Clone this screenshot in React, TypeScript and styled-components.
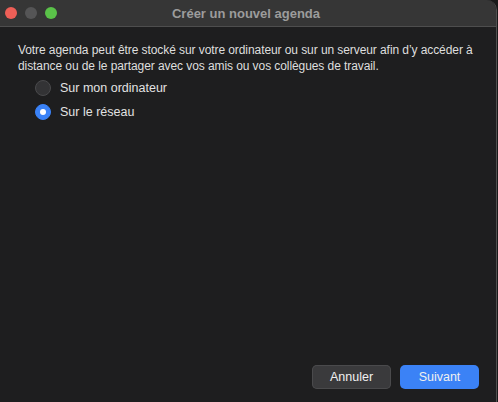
import React from "react";
import styled, { createGlobalStyle } from "styled-components";

const Global = createGlobalStyle`
  html, body { margin: 0; padding: 0; background: #1a1a1a; }
  body { font-family: "Liberation Sans", Arial, sans-serif; -webkit-font-smoothing: antialiased; }
  * { box-sizing: border-box; }
`;

const Window = styled.div`
  width: 497px;
  height: 402px;
  display: flex;
  flex-direction: column;
  background: #1e1e1f;
  border-right: 1px solid #505050;
  border-top-right-radius: 10px;
  overflow: hidden;
`;

const TitleBar = styled.div`
  height: 27px;
  flex: none;
  display: flex;
  align-items: center;
  position: relative;
  background: #363636;
  border-bottom: 1px solid #4e4e4e;
  padding-left: 5px;
`;

const Lights = styled.div`
  display: flex;
  gap: 8px;
`;

const Light = styled.span<{ $c: string }>`
  width: 12px;
  height: 12px;
  border-radius: 50%;
  background: ${(p) => p.$c};
`;

const Title = styled.div`
  position: absolute;
  inset: 0 4px 0 0;
  display: flex;
  align-items: center;
  justify-content: center;
  font-size: 13px;
  font-weight: 700;
  color: #9c9c9c;
  pointer-events: none;
`;

const Body = styled.div`
  flex: 1;
  display: flex;
  flex-direction: column;
  padding: 15px 17px 13px 18px;
`;

const Intro = styled.p`
  margin: 0;
  font-size: 12px;
  letter-spacing: -0.08px;
  line-height: 16px;
  color: #dedede;
`;

const Options = styled.div`
  display: flex;
  flex-direction: column;
  gap: 8px;
  margin-top: 6px;
  padding-left: 17px;
`;

const Option = styled.label`
  display: flex;
  align-items: center;
  gap: 9px;
  font-size: 12.5px;
  color: #e2e2e2;
  height: 16px;
`;

const Radio = styled.span<{ $on?: boolean }>`
  width: 16px;
  height: 16px;
  border-radius: 50%;
  display: flex;
  align-items: center;
  justify-content: center;
  background: ${(p) => (p.$on ? "#3a82f7" : "#333335")};
  border: 1px solid ${(p) => (p.$on ? "#3a82f7" : "#4a4a4c")};
  &::after {
    content: "";
    width: 6px;
    height: 6px;
    border-radius: 50%;
    background: #fff;
    display: ${(p) => (p.$on ? "block" : "none")};
  }
`;

const Spacer = styled.div`
  flex: 1;
`;

const Footer = styled.div`
  display: flex;
  justify-content: flex-end;
  gap: 9px;
`;

const Button = styled.button<{ $primary?: boolean }>`
  width: 79px;
  height: 24px;
  border-radius: 5px;
  font-family: inherit;
  font-size: 12.5px;
  color: #f0f0f0;
  background: ${(p) => (p.$primary ? "#3b82f6" : "#3a3a3c")};
  border: none;
  box-shadow: ${(p) => (p.$primary ? "none" : "inset 0 0 0 1px #4a4a4c")};
  padding: 0;
`;

export default function App() {
  return (
    <>
      <Global />
      <Window>
        <TitleBar>
          <Lights>
            <Light $c="#ee5f57" />
            <Light $c="#555556" />
            <Light $c="#5ac249" />
          </Lights>
          <Title>Créer un nouvel agenda</Title>
        </TitleBar>
        <Body>
          <Intro>
            Votre agenda peut être stocké sur votre ordinateur ou sur un serveur afin d’y accéder à distance ou de le partager avec vos amis ou vos collègues de travail.
          </Intro>
          <Options>
            <Option>
              <Radio />
              Sur mon ordinateur
            </Option>
            <Option>
              <Radio $on />
              Sur le réseau
            </Option>
          </Options>
          <Spacer />
          <Footer>
            <Button>Annuler</Button>
            <Button $primary>Suivant</Button>
          </Footer>
        </Body>
      </Window>
    </>
  );
}
